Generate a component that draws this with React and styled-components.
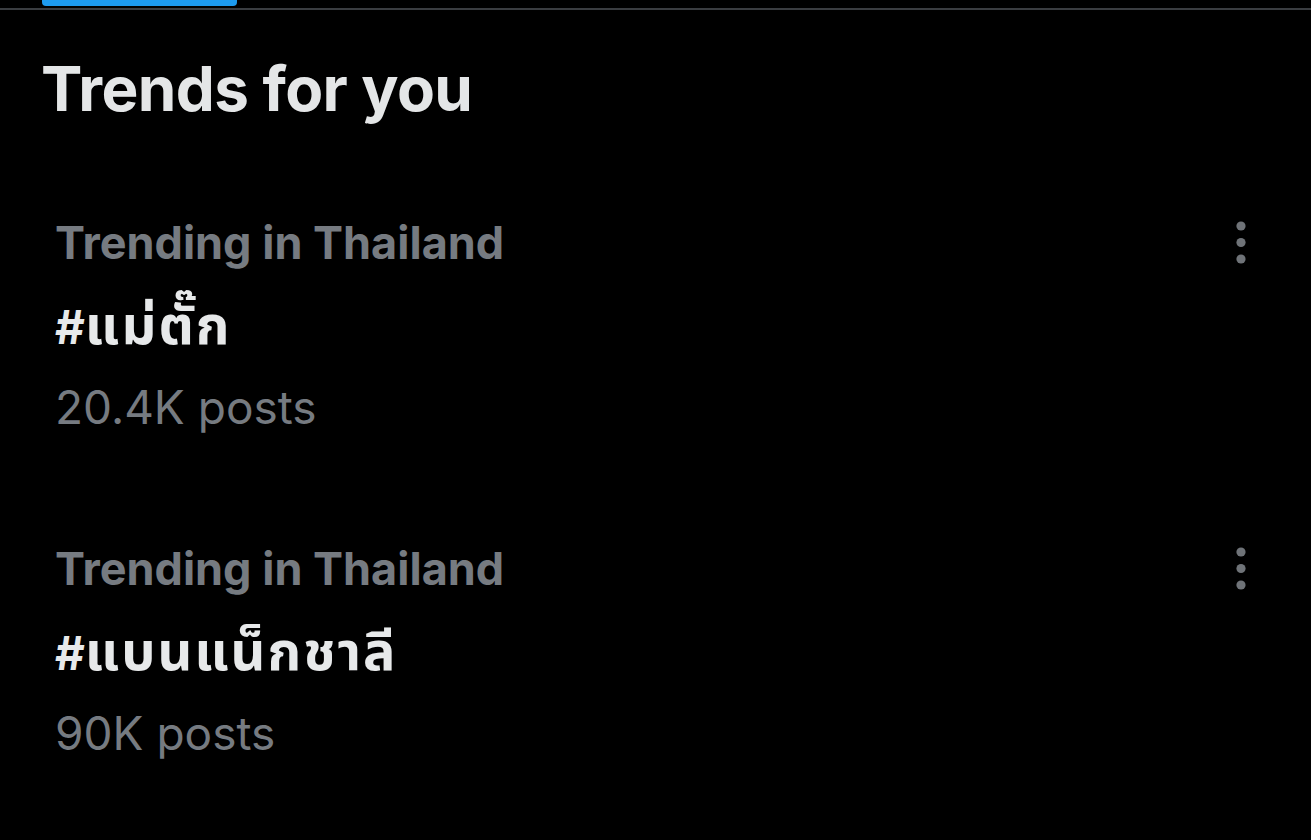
import styled, { createGlobalStyle } from "styled-components";

const Global = createGlobalStyle`
  html, body {
    margin: 0;
    padding: 0;
    background: #000;
  }
  body {
    font-family: Inter, "Noto Sans", "Noto Sans Thai", sans-serif;
    -webkit-font-smoothing: antialiased;
  }
`;

const Page = styled.div`
  width: 1311px;
  height: 840px;
  background: #000;
  overflow: hidden;
`;

const TabBar = styled.div`
  height: 8px;
  border-bottom: 2px solid #3a3d41;
  padding-left: 42px;
`;

const Indicator = styled.div`
  width: 195px;
  height: 6px;
  background: #1d9bf0;
  border-radius: 0 0 4px 4px;
`;

const Title = styled.h2`
  margin: 39px 0 0;
  padding-left: 41px;
  font-size: 62px;
  line-height: 80px;
  font-weight: 700;
  color: #e4e6e7;
  letter-spacing: -0.6px;
`;

const List = styled.div`
  margin-top: 73px;
  display: flex;
  flex-direction: column;
  gap: 80px;
`;

const Row = styled.div`
  display: flex;
  justify-content: space-between;
  align-items: flex-start;
  padding: 0 58px 0 55px;
`;

const Info = styled.div`
  display: flex;
  flex-direction: column;
`;

const Line = styled.div`
  height: 82px;
  line-height: 82px;
  font-size: ${(p) => (p.$bold && !p.$white ? "45px" : "46px")};
  font-weight: ${(p) => (p.$bold ? 700 : 400)};
  color: ${(p) => (p.$white ? "#e7e9ea" : "#767b81")};
  white-space: nowrap;
`;

const Thai = styled.span`
  font-size: 54px;
  letter-spacing: 2px;
`;

const MoreButton = styled.button`
  margin-top: 16px;
  width: 24px;
  height: 50px;
  padding: 0;
  border: 0;
  background: none;
  display: flex;
  align-items: center;
  justify-content: center;
`;

function Dots() {
  return (
    <svg width="12" height="46" viewBox="0 0 12 46">
      <circle cx="6" cy="6" r="4.6" fill="#6f7378" />
      <circle cx="6" cy="22.5" r="4.6" fill="#6f7378" />
      <circle cx="6" cy="39" r="4.6" fill="#6f7378" />
    </svg>
  );
}

const trends = [
  { place: "Trending in Thailand", tag: "แม่ตั๊ก", posts: "20.4K posts" },
  { place: "Trending in Thailand", tag: "แบนแน็กชาลี", posts: "90K posts" },
];

export default function App() {
  return (
    <Page>
      <Global />
      <TabBar>
        <Indicator />
      </TabBar>
      <Title>Trends for you</Title>
      <List>
        {trends.map((t, i) => (
          <Row key={i}>
            <Info>
              <Line $bold>{t.place}</Line>
              <Line $bold $white>
                #<Thai>{t.tag}</Thai>
              </Line>
              <Line>{t.posts}</Line>
            </Info>
            <MoreButton aria-label="More">
              <Dots />
            </MoreButton>
          </Row>
        ))}
      </List>
    </Page>
  );
}
